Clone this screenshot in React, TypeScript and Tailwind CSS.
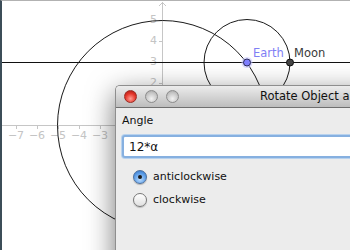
import React from 'react';

const ui = { fontFamily: '"DejaVu Sans", "Open Sans", sans-serif' };

const yTicks = [1, 2, 3, 4, 5];
const xTicks = [-7, -6, -5, -4, -3, -2, -1];

function Canvas() {
  return (
    <svg width="348" height="249" viewBox="2 1 348 249" className="block" style={ui}>
      {/* axes */}
      <line x1="0" y1="125.5" x2="350" y2="125.5" stroke="#c6c6c6" />
      <line x1="162.5" y1="2" x2="162.5" y2="250" stroke="#c6c6c6" />
      <polyline points="159,6 162.5,2.5 166,6" fill="none" stroke="#c6c6c6" />
      {yTicks.map((n) => (
        <g key={n}>
          <line x1="159" y1={125.5 - 21 * n} x2="162.5" y2={125.5 - 21 * n} stroke="#c6c6c6" />
          {n > 1 && (
            <text x="157" y={124 - 21 * n + 4} textAnchor="end" fontSize="11" fill="#c4c4c4">
              {n}
            </text>
          )}
        </g>
      ))}
      {xTicks.map((n) => (
        <g key={n}>
          <line x1={163.5 + 21 * n} y1="125.5" x2={163.5 + 21 * n} y2="129" stroke="#c6c6c6" />
          {n < -2 && (
            <text x={163 + 21 * n} y="139" textAnchor="middle" fontSize="11" fill="#c4c4c4">
              {'\u2212' + Math.abs(n)}
            </text>
          )}
        </g>
      ))}

      {/* line y = 3 */}
      <line x1="0" y1="62.5" x2="350" y2="62.5" stroke="#111" />

      {/* orbits */}
      <circle cx="162.5" cy="125.5" r="105" fill="none" stroke="#1a1a1a" />
      <circle cx="247" cy="62.5" r="43" fill="none" stroke="#1a1a1a" />

      {/* points */}
      <circle cx="247" cy="62.5" r="5.5" fill="#c4c4ff" opacity="0.6" />
      <circle cx="247" cy="62.5" r="3.5" fill="#8080ff" stroke="#2c2c5a" />
      <circle cx="290" cy="62.5" r="3.5" fill="#444" stroke="#111" />
      <text x="253" y="57" fontSize="11.5" fill="#7f7ff5">Earth</text>
      <text x="294" y="57" fontSize="11.5" fill="#3a3a3a">Moon</text>
    </svg>
  );
}

function Radio({ checked, label }: { checked?: boolean; label: string }) {
  return (
    <div className="flex items-center gap-[6px] h-[16px]">
      {checked ? (
        <span className="w-[14px] h-[14px] rounded-full border border-[#4a6f9e] bg-[radial-gradient(circle_at_50%_70%,#b9dcff,#5a9be6_60%,#2f6fc0)] flex items-center justify-center shadow-[0_1px_1px_rgba(0,0,0,0.25)]">
          <span className="w-[4px] h-[4px] rounded-full bg-[#1a1a1a]" />
        </span>
      ) : (
        <span className="w-[14px] h-[14px] rounded-full border border-[#777] bg-[linear-gradient(#ffffff,#e0e0e0)] shadow-[0_1px_1px_rgba(0,0,0,0.2)]" />
      )}
      <span className="text-[11px] text-[#111]">{label}</span>
    </div>
  );
}

function Dialog() {
  return (
    <div
      className="absolute left-[113px] top-[84px] w-[420px] h-[200px] bg-[#ececec] border-l border-t border-[#8e8e8e] rounded-tl-[5px] shadow-[0_8px_28px_rgba(0,0,0,0.55)] flex flex-col"
      style={ui}
    >
      <div className="h-[22px] flex items-center pl-[8px] bg-[linear-gradient(#ececec,#bdbdbd)] border-b border-[#6f6f6f] rounded-tl-[4px]">
        <div className="flex gap-[8px]">
          <span className="w-[13px] h-[13px] rounded-full border border-[#9a2c24] bg-[radial-gradient(circle_at_50%_70%,#ff9d92,#e4352a_55%,#a01810)]" />
          <span className="w-[13px] h-[13px] rounded-full border border-[#8c8c8c] bg-[radial-gradient(circle_at_50%_70%,#f2f2f2,#c6c6c6_60%,#a2a2a2)]" />
          <span className="w-[13px] h-[13px] rounded-full border border-[#8c8c8c] bg-[radial-gradient(circle_at_50%_70%,#f2f2f2,#c6c6c6_60%,#a2a2a2)]" />
        </div>
        <span className="ml-[81px] text-[11.5px] text-[#111] whitespace-nowrap">Rotate Object around Point by Angle</span>
      </div>
      <div className="pl-[6px] pt-[5px] flex flex-col">
        <div className="h-[16px] leading-[16px] text-[11px] text-[#111]">Angle</div>
        <div className="mt-[6px] h-[23px] rounded-[3px] border-2 border-[#86b0e0] shadow-[0_0_0_1px_#b8d2ee] bg-white flex items-center pl-[5px] text-[12px] text-[#111]">
          12*α
        </div>
        <div className="mt-[11px] ml-[11px] flex flex-col gap-[7px]">
          <Radio checked label="anticlockwise" />
          <Radio label="clockwise" />
        </div>
      </div>
    </div>
  );
}

export default function App() {
  return (
    <div className="relative w-[350px] h-[250px] overflow-hidden bg-white border-t border-t-[#b2b2b2] border-l-2 border-l-[#3c4d58]">
      <Canvas />
      <Dialog />
    </div>
  );
}
